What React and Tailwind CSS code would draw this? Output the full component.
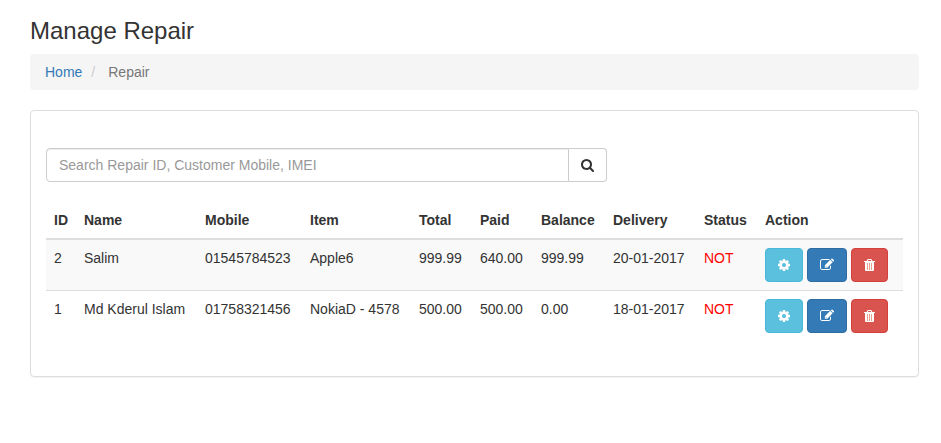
const rows = [
  ["2", "Salim", "01545784523", "Apple6", "999.99", "640.00", "999.99", "20-01-2017"],
  ["1", "Md Kderul Islam", "01758321456", "NokiaD - 4578", "500.00", "500.00", "0.00", "18-01-2017"],
];
const heads = ["ID", "Name", "Mobile", "Item", "Total", "Paid", "Balance", "Delivery", "Status", "Action"];
const widths = [30, 121, 105, 109, 61, 61, 72, 91, 61, 146];

const Svg = ({ w, children }) => (
  <svg width={w} height="14" viewBox={`0 0 ${w * 128} 1792`} fill="currentColor">{children}</svg>
);
const Cog = () => (
  <Svg w={12}><path d="M1024 896q0-106-75-181t-181-75-181 75-75 181 75 181 181 75 181-75 75-181zm512-109v222q0 12-8 23t-20 13l-185 28q-19 54-39 91 35 50 107 138 10 12 10 25t-9 23q-27 37-99 108t-94 71q-12 0-26-9l-138-108q-44 23-91 38-16 136-29 186-7 28-36 28H657q-14 0-24.500-8.500T621 1634l-28-184q-49-16-90-37l-141 107q-10 9-25 9-14 0-25-11-126-114-165-168-7-10-7-23 0-12 8-23 15-21 51-66.500t54-70.500q-27-50-41-99L29 1040q-13-2-21-12.500T0 1004V782q0-12 8-23t19-13l186-28q14-46 39-92-40-57-107-138-10-12-10-24 0-10 9-23 26-36 98.500-107.500T337 262q13 0 26 10l138 107q44-23 91-38 16-136 29-186 7-28 36-28h222q14 0 24.500 8.500T915 157l28 184q49 16 90 37l142-107q9-9 24-9 13 0 25 10 129 119 165 170 7 8 7 22 0 12-8 23-15 21-51 66.500t-54 70.500q26 50 41 98l183 28q13 2 21 12.500t8 23.500z" /></Svg>
);
const Edit = () => (
  <Svg w={14}>
    <path d="M1408 930v318q0 119-84.500 203.500T1120 1536H288q-119 0-203.500-84.500T0 1248V416q0-119 84.500-203.500T288 128h832q63 0 117 25 15 7 18 23 3 17-9 29l-49 49q-14 14-32 8-23-6-45-6H288q-66 0-113 47t-47 113v832q0 66 47 113t113 47h832q66 0 113-47t47-113v-190z" />
    <path d="M1312 236l308 308-692 692H620V928zm464 152l-92 92-308-308 92-92q28-28 68-28t68 28l172 172q28 28 28 68t-28 68z" />
    <path fill="#337ab7" d="M750 1000l100 100-25 25h-50v-50h-50v-50z" />
  </Svg>
);
const Trash = () => (
  <svg width="11" height="14" viewBox="0 0 11 14" fill="currentColor">
    <path fillRule="evenodd" d="M0 3h2.600L3.300 1.600Q3.600 1 4.200 1h2.600q.6 0 .9.600L8.400 3H11v1h-1v8q0 1-1 1H2q-1 0-1-1V4H0zm3.800 0h3.400l-.4-1H4.200z" />
    <path fill="#e9a08f" d="M3 5h1v7H3zM5 5h1v7H5zM7 5h1v7H7z" />
  </svg>
);
const Search = () => (
  <Svg w={13}><path d="M1152 832q0-185-131.500-316.500T704 384 387.500 515.500 256 832t131.500 316.500T704 1280t316.500-131.500T1152 832zm512 832q0 52-38 90t-90 38q-54 0-90-38l-343-342q-179 124-399 124-143 0-273.500-55.500t-225-150-150-225T0 832t55.500-273.500 150-225 225-150T704 128t273.500 55.500 225 150 150 225T1408 832q0 220-124 399l343 343q37 37 37 90z" /></Svg>
);

export default function App() {
  return (
    <div className="h-[443px] bg-white px-[30px] pt-[18px] font-['Liberation_Sans',Arial,sans-serif] text-[14px] leading-5 text-[#333]">
      <h1 className="mb-[10px] text-[24px] leading-[26px] font-normal">Manage Repair</h1>
      <nav className="flex h-9 w-[889px] items-center rounded bg-[#f5f5f5] px-[15px]">
        <a className="text-[#337ab7]">Home</a>
        <span className="pl-[9px] pr-[13px] text-[#ccc]">/</span>
        <span className="text-[#777]">Repair</span>
      </nav>
      <main className="mt-5 h-[267px] w-[889px] rounded border border-[#ddd] px-[15px] pt-[37px] shadow-[0_1px_1px_rgba(0,0,0,0.05)]">
        <div className="flex h-[34px] w-[561px]">
          <input placeholder="Search Repair ID, Customer Mobile, IMEI" className="w-[523px] rounded-l border border-[#ccc] px-3 shadow-[inset_0_1px_1px_rgba(0,0,0,0.075)] placeholder:text-[#999]" />
          <button aria-label="Search" className="flex w-[38px] items-center justify-center rounded-r border border-l-0 border-[#ccc]"><Search /></button>
        </div>
        <table className="mt-5 w-[857px] table-fixed border-collapse text-left">
          <colgroup>{widths.map((w, i) => <col key={i} style={{ width: w }} />)}</colgroup>
          <thead><tr className="h-[37px] border-b-2 border-[#ddd]">{heads.map((h) => <th key={h} className="p-2 font-bold">{h}</th>)}</tr></thead>
          <tbody>
            {rows.map((r, n) => (
              <tr key={n} className="h-[51px] border-t border-[#ddd] align-top odd:bg-[#f9f9f9] first:border-t-2">
                {r.map((c, i) => <td key={i} className="p-2 whitespace-nowrap">{c}</td>)}
                <td className="p-2 text-[#f00]">NOT</td>
                <td className="p-2">
                  <div className="flex gap-1 text-white">
                    <button className="flex h-[34px] w-[38px] items-center justify-center rounded border border-[#46b8da] bg-[#5bc0de]"><Cog /></button>
                    <button className="flex h-[34px] w-10 items-center justify-center rounded border border-[#2e6da4] bg-[#337ab7]"><Edit /></button>
                    <button className="flex h-[34px] w-[37px] items-center justify-center rounded border border-[#d43f3a] bg-[#d9534f]"><Trash /></button>
                  </div>
                </td>
              </tr>
            ))}
          </tbody>
        </table>
      </main>
    </div>
  );
}
